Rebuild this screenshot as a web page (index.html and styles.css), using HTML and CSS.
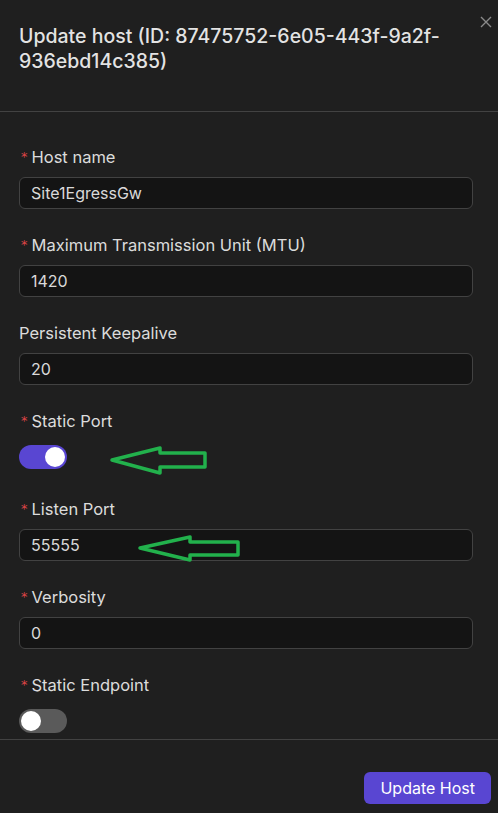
FILE: index.html
```html
<!DOCTYPE html>
<html>
<head>
<meta charset="utf-8">
<link rel="stylesheet" href="styles.css">
</head>
<body>
<div class="drawer">
  <div class="header">
    <div class="title">Update host (ID: 87475752-6e05-443f-9a2f-936ebd14c385)</div>
    <button class="close" aria-label="Close">
      <svg width="12" height="12" viewBox="0 0 12 12"><path d="M1 1L11 11M11 1L1 11" stroke="#8a8a8a" stroke-width="1.4" fill="none"/></svg>
    </button>
  </div>
  <div class="body">
    <div class="item">
      <label class="label"><span class="req">*</span>Host name</label>
      <div class="input">Site1EgressGw</div>
    </div>
    <div class="item">
      <label class="label"><span class="req">*</span>Maximum Transmission Unit (MTU)</label>
      <div class="input">1420</div>
    </div>
    <div class="item">
      <label class="label">Persistent Keepalive</label>
      <div class="input">20</div>
    </div>
    <div class="item">
      <label class="label"><span class="req">*</span>Static Port</label>
      <div class="switch-row"><span class="switch on"><span class="knob"></span></span></div>
    </div>
    <div class="item">
      <label class="label"><span class="req">*</span>Listen Port</label>
      <div class="input">55555</div>
    </div>
    <div class="item">
      <label class="label"><span class="req">*</span>Verbosity</label>
      <div class="input">0</div>
    </div>
    <div class="item">
      <label class="label"><span class="req">*</span>Static Endpoint</label>
      <div class="switch-row"><span class="switch"><span class="knob"></span></span></div>
    </div>
  </div>
  <div class="footer">
    <button class="primary">Update Host</button>
  </div>
  <svg class="annot" width="498" height="813" viewBox="0 0 498 813">
    <polygon points="112,460 160,448 160,453 205,453 205,467 160,467 160,473" fill="none" stroke="#22b14c" stroke-width="3.5" stroke-linejoin="round"/>
    <polygon points="140,548 190,537 190,542 238,542 238,555 190,555 190,560" fill="none" stroke="#22b14c" stroke-width="3.5" stroke-linejoin="round"/>
  </svg>
</div>
</body>
</html>
```
FILE: styles.css
```css
html, body {
  margin: 0;
  padding: 0;
  background: #1f1f1f;
}
body {
  font-family: Inter, "Noto Sans", sans-serif;
  color: rgba(255,255,255,0.85);
}
.drawer {
  position: relative;
  width: 498px;
  height: 813px;
  display: flex;
  flex-direction: column;
  overflow: hidden;
  background: #1f1f1f;
}
.header {
  position: relative;
  padding: 24px 40px 37px 19px;
  border-bottom: 1px solid #424242;
}
.title {
  font-size: 19.5px;
  font-weight: 500;
  line-height: 25px;
  color: rgba(255,255,255,0.88);
}
.close {
  position: absolute;
  top: 16px;
  right: 6px;
  width: 12px;
  height: 12px;
  padding: 0;
  border: 0;
  background: transparent;
  display: flex;
}
.body {
  flex: 1;
  overflow: hidden;
  padding: 33px 25px 0 19px;
}
.item {
  display: flex;
  flex-direction: column;
  margin-bottom: 24px;
}
.label {
  font-size: 16.5px;
  line-height: 24px;
  height: 24px;
  margin-bottom: 8px;
  display: flex;
  align-items: center;
}
.req {
  color: #dc4446;
  font-size: 13px;
  margin: 0 4px 0 2px;
  font-family: "DejaVu Sans", sans-serif;
}
.input {
  height: 32px;
  box-sizing: border-box;
  border: 1px solid #424242;
  border-radius: 6px;
  background: #141414;
  padding: 0 11px;
  font-size: 16px;
  line-height: 30px;
  color: rgba(255,255,255,0.85);
}
.switch-row {
  height: 32px;
  display: flex;
  align-items: center;
}
.switch {
  width: 48px;
  height: 24px;
  border-radius: 12px;
  background: #5a5a5a;
  display: flex;
  align-items: center;
  padding: 2px;
  box-sizing: border-box;
}
.switch.on {
  background: #5946d2;
  justify-content: flex-end;
}
.knob {
  width: 20px;
  height: 20px;
  border-radius: 50%;
  background: #fff;
}
.footer {
  border-top: 1px solid #424242;
  padding: 32px 7px 9px 19px;
  display: flex;
  justify-content: flex-end;
}
.primary {
  height: 32px;
  padding: 0 16px;
  border: 0;
  border-radius: 6px;
  background: #5946d2;
  color: #fff;
  font-family: Inter, "Noto Sans", sans-serif;
  font-size: 16px;
}
.annot {
  position: absolute;
  left: 0;
  top: 0;
  pointer-events: none;
}
```
